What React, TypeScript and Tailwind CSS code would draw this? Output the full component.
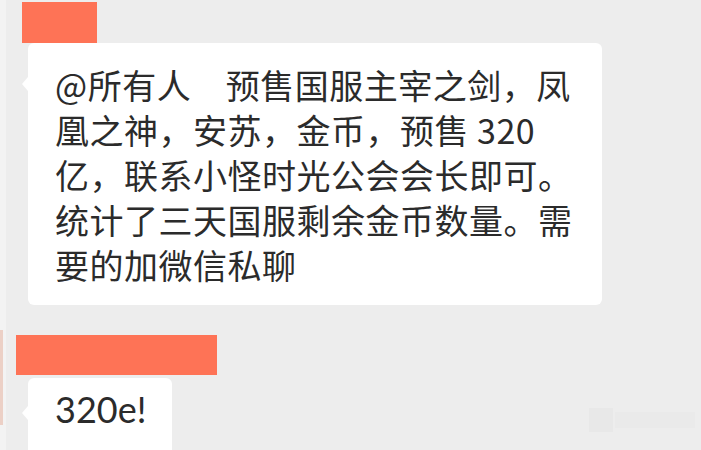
export default function App() {
  const lines = [
    "@所有人\u3000预售国服主宰之剑，凤",
    "凰之神，安苏，金币，预售 320",
    "亿，联系小怪时光公会会长即可。",
    "统计了三天国服剩余金币数量。需",
    "要的加微信私聊",
  ];

  return (
    <div
      className="relative flex w-[701px] h-[450px] overflow-hidden bg-[#ededed] text-[#2b2b2b]"
      style={{ fontFamily: '"Noto Sans CJK SC", "Noto Sans", sans-serif' }}
    >
      {/* avatar edge on the far left */}
      <div className="flex flex-col shrink-0 w-[6px] bg-[#f3f3f3]">
        <div className="shrink-0 h-[330px]" />
        <div className="shrink-0 w-[3px] h-[95px] bg-[#ecd0c6]" />
      </div>

      <div className="flex flex-col flex-1">
        {/* nickname, covered */}
        <div className="shrink-0 mt-[2px] ml-[16px] w-[75px] h-[41px] bg-[#fe7356]" />

        {/* first message */}
        <div className="relative shrink-0 ml-[22px] w-[574px] h-[262px] rounded-[6px] bg-white pl-[27px] pt-[19px]">
          <div className="absolute left-[-6px] top-[34px] w-0 h-0 border-y-[7px] border-y-transparent border-r-[6px] border-r-white" />
          <div className="text-[34px] leading-[45px] tracking-[0.5px]">
            {lines.map((l) => (
              <div key={l} className="whitespace-pre">
                {l}
              </div>
            ))}
          </div>
        </div>

        {/* nickname, covered */}
        <div className="shrink-0 mt-[30px] ml-[10px] w-[201px] h-[40px] bg-[#fe7356]" />

        {/* second message */}
        <div className="relative shrink-0 mt-[3px] ml-[22px] w-[144px] h-[90px] rounded-[6px] bg-white pl-[27px] pt-[6px]">
          <div className="absolute left-[-6px] top-[28px] w-0 h-0 border-y-[7px] border-y-transparent border-r-[6px] border-r-white" />
          <div className="text-[36px] leading-[50px]" style={{ fontFamily: '"Lato", "Noto Sans", sans-serif' }}>
            320e!
          </div>
        </div>
      </div>

      {/* faint watermark */}
      <div className="absolute right-[6px] top-[408px] flex gap-[2px] opacity-40">
        <div className="w-[24px] h-[24px] bg-[#e3e3e3]" />
        <div className="w-[80px] h-[16px] mt-[4px] bg-[#e6e6e6]" />
      </div>
    </div>
  );
}
